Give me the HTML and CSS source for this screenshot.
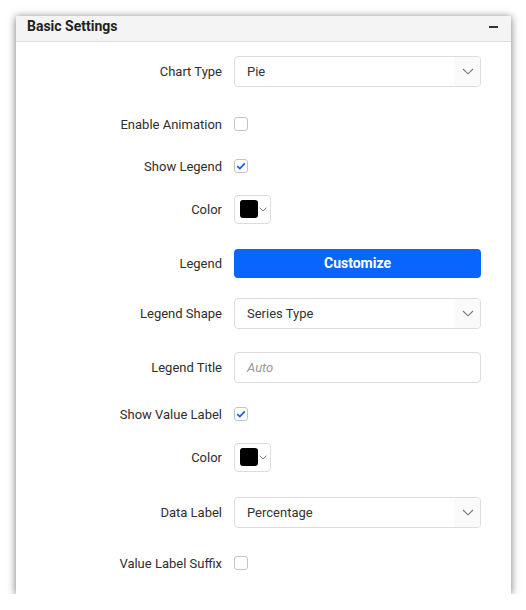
FILE: index.html
```html
<!DOCTYPE html>
<html>
<head>
<meta charset="utf-8">
<link rel="stylesheet" href="styles.css">
</head>
<body>
<div class="panel">
  <div class="panel-header">
    <span class="panel-title">Basic Settings</span>
    <span class="collapse"></span>
  </div>
  <div class="panel-body">
    <div class="row">
      <label class="label">Chart Type</label>
      <div class="dropdown"><span class="dd-text">Pie</span><span class="dd-icon"><svg width="12" height="7" viewBox="0 0 12 7"><path d="M1 1 L6 5.8 L11 1" fill="none" stroke="#6e7784" stroke-width="1.1"/></svg></span></div>
    </div>
    <div class="row sp23">
      <label class="label">Enable Animation</label>
      <span class="checkbox"></span>
    </div>
    <div class="row sp12">
      <label class="label">Show Legend</label>
      <span class="checkbox"><svg width="12" height="12" viewBox="0 0 12 12"><path d="M2.3 6.2 L4.8 8.6 L9.8 3.4" fill="none" stroke="#0a5ef5" stroke-width="1.7"/></svg></span>
    </div>
    <div class="row sp13">
      <label class="label">Color</label>
      <div class="picker"><span class="swatch"></span><svg class="pk-icon" width="8" height="5" viewBox="0 0 8 5"><path d="M0.6 0.8 L4 4 L7.4 0.8" fill="none" stroke="#777" stroke-width="1"/></svg></div>
    </div>
    <div class="row sp24">
      <label class="label">Legend</label>
      <button class="btn-primary">Customize</button>
    </div>
    <div class="row sp20">
      <label class="label">Legend Shape</label>
      <div class="dropdown"><span class="dd-text">Series Type</span><span class="dd-icon"><svg width="12" height="7" viewBox="0 0 12 7"><path d="M1 1 L6 5.8 L11 1" fill="none" stroke="#6e7784" stroke-width="1.1"/></svg></span></div>
    </div>
    <div class="row sp24">
      <label class="label">Legend Title</label>
      <div class="textbox"><span class="placeholder">Auto</span></div>
    </div>
    <div class="row sp17">
      <label class="label">Show Value Label</label>
      <span class="checkbox"><svg width="12" height="12" viewBox="0 0 12 12"><path d="M2.3 6.2 L4.8 8.6 L9.8 3.4" fill="none" stroke="#0a5ef5" stroke-width="1.7"/></svg></span>
    </div>
    <div class="row sp13">
      <label class="label">Color</label>
      <div class="picker"><span class="swatch"></span><svg class="pk-icon" width="8" height="5" viewBox="0 0 8 5"><path d="M0.6 0.8 L4 4 L7.4 0.8" fill="none" stroke="#777" stroke-width="1"/></svg></div>
    </div>
    <div class="row sp25">
      <label class="label">Data Label</label>
      <div class="dropdown"><span class="dd-text">Percentage</span><span class="dd-icon"><svg width="12" height="7" viewBox="0 0 12 7"><path d="M1 1 L6 5.8 L11 1" fill="none" stroke="#6e7784" stroke-width="1.1"/></svg></span></div>
    </div>
    <div class="row sp21">
      <label class="label">Value Label Suffix</label>
      <span class="checkbox"></span>
    </div>
  </div>
</div>
</body>
</html>
```
FILE: styles.css
```css
html, body {
  margin: 0;
  padding: 0;
  background: #ffffff;
}
body {
  font-family: Roboto, "Liberation Sans", Arial, sans-serif;
  color: #333333;
}
.panel {
  margin: 16px 0 0 16px;
  width: 495px;
  height: 578px;
  background: #ffffff;
  box-shadow: 0 1px 8px rgba(0, 0, 0, 0.55);
  display: flex;
  flex-direction: column;
}
.panel-header {
  height: 25px;
  background: #f4f4f4;
  border-bottom: 1px solid #dedede;
  display: flex;
  align-items: flex-start;
  justify-content: space-between;
  padding: 2px 13px 0 11px;
  box-sizing: content-box;
}
.panel-header {
  height: 23px;
}
.panel-title {
  font-size: 14px;
  font-weight: 700;
  color: #1f1f1f;
  line-height: 16px;
}
.collapse {
  width: 9px;
  height: 2px;
  background: #333;
  margin-top: 8px;
}
.panel-body {
  padding-top: 14px;
  display: flex;
  flex-direction: column;
}
.row {
  height: 30px;
  display: flex;
  align-items: center;
  gap: 12px;
}
.sp12 { margin-top: 12px; }
.sp13 { margin-top: 13px; }
.sp17 { margin-top: 17px; }
.sp20 { margin-top: 20px; }
.sp21 { margin-top: 21px; }
.sp23 { margin-top: 23px; }
.sp24 { margin-top: 24px; }
.sp25 { margin-top: 25px; }
.label {
  width: 206px;
  text-align: right;
  font-size: 13px;
  color: #2e2e2e;
}
.dropdown, .textbox {
  box-sizing: border-box;
  width: 247px;
  height: 31px;
  border: 1px solid #dcdcdc;
  border-radius: 4px;
  display: flex;
  align-items: center;
  overflow: hidden;
}
.dd-text {
  flex: 1;
  padding-left: 12px;
  font-size: 13px;
  color: #333333;
}
.dd-icon {
  width: 26px;
  height: 100%;
  background: #fafafa;
  display: flex;
  align-items: center;
  justify-content: center;
}
.dd-icon svg {
  display: block;
  margin-left: 1px;
}
.placeholder {
  padding-left: 12px;
  font-size: 13px;
  font-style: italic;
  color: #9a9a9a;
}
.checkbox {
  box-sizing: border-box;
  width: 14px;
  height: 14px;
  border: 1px solid #c4c4c4;
  border-radius: 3px;
  background: #fff;
  display: flex;
  align-items: center;
  justify-content: center;
}
.checkbox svg {
  display: block;
}
.picker {
  box-sizing: border-box;
  width: 37px;
  height: 29px;
  border: 1px solid #dcdcdc;
  border-radius: 4px;
  display: flex;
  align-items: center;
  padding-left: 5px;
  gap: 1px;
}
.swatch {
  width: 18px;
  height: 18px;
  background: #000;
  border-radius: 3px;
}
.pk-icon {
  display: block;
  margin-top: 1px;
}
.btn-primary {
  box-sizing: border-box;
  width: 247px;
  height: 29px;
  border: none;
  border-radius: 4px;
  background: #0866ff;
  color: #ffffff;
  font-family: Roboto, "Liberation Sans", Arial, sans-serif;
  font-size: 14px;
  font-weight: 700;
  padding: 0;
}
```
